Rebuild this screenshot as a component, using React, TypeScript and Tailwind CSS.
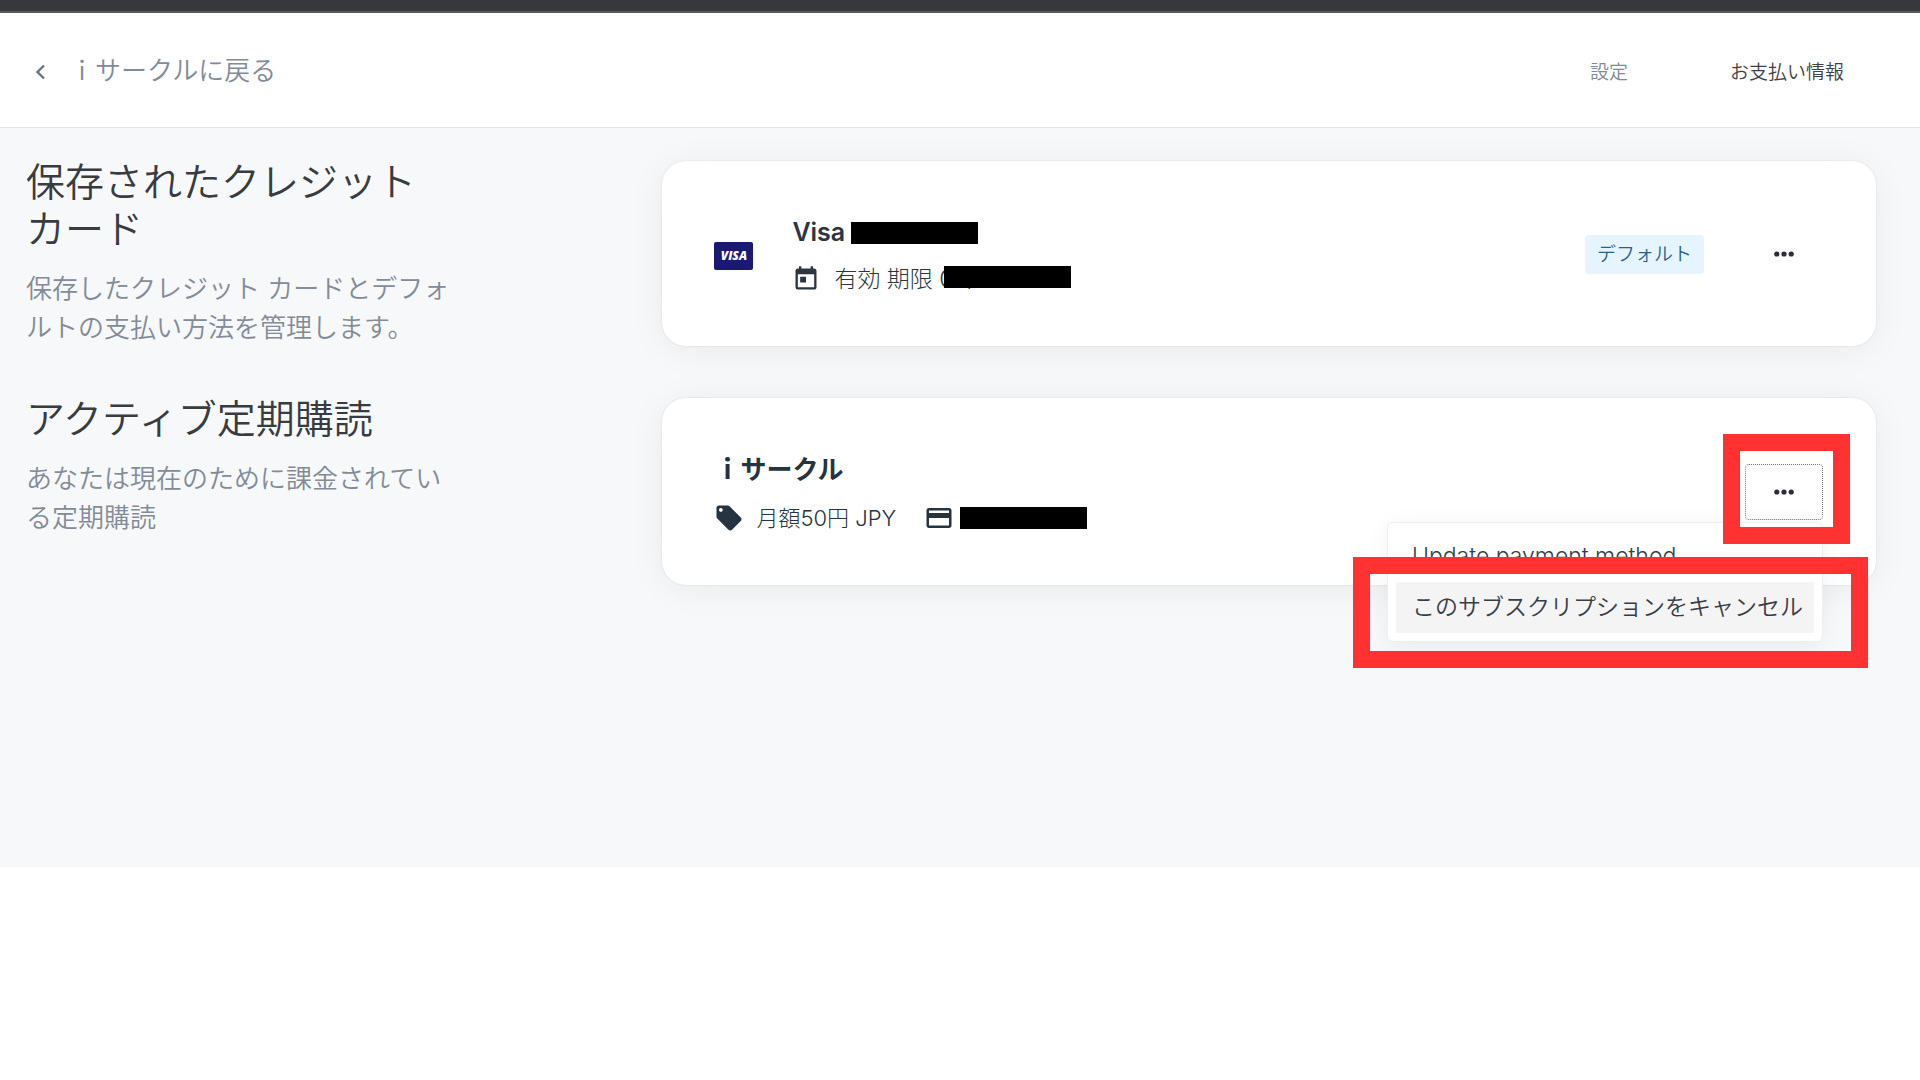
import React, { useState } from "react";
import { MdCreditCard, MdLocalOffer, MdToday } from "react-icons/md";

type SectionProps = {
  title: string;
  description: string;
  children: React.ReactNode;
};

const Section = ({ title, description, children }: SectionProps) => (
  <section className="flex items-start">
    <div className="w-[34.5%] shrink-0 pl-[26px]">
      <div className="max-w-[430px]">
        <h2 className="text-[39px] leading-[47px] text-[#383b40]">{title}</h2>
        <p className="mt-[17px] text-[26px] leading-[39px] text-[#828b97]">
          {description}
        </p>
      </div>
    </div>
    <div className="flex-1 pt-[3px] pr-11">{children}</div>
  </section>
);

const Card = ({ children }: { children: React.ReactNode }) => (
  <div className="flex items-center rounded-3xl bg-white pt-[52px] pr-[53px] pb-[47px] pl-[52px] shadow-[0_0_2px_rgba(0,0,0,0.12),0_4px_36px_rgba(0,0,0,0.06)]">
    {children}
  </div>
);

const Redacted = () => <span className="block h-[22px] w-[127px] bg-black" />;

const Dots = () => (
  <svg width="20" height="6" viewBox="0 0 20 6" fill="#2a2e34">
    <circle cx="2.8" cy="3" r="2.6" />
    <circle cx="10" cy="3" r="2.6" />
    <circle cx="17.2" cy="3" r="2.6" />
  </svg>
);

const App = () => {
  const [open, setOpen] = useState<boolean>(true);

  return (
    <div className="bg-white font-['Inter','Noto_Sans_CJK_JP',sans-serif] font-[350]">
      <div className="h-[13px] border-b-2 border-[#58595d] bg-[#37383d]" />

      {/* Header */}
      <header className="flex h-[115px] items-center justify-between border-b border-[#e2e4e6] pr-[76px] pl-[34px]">
        <a href="#" className="flex items-center gap-[23px] text-[26px] text-[#828b97]">
          <svg
            width="12"
            height="16"
            viewBox="0 0 12 16"
            fill="none"
            stroke="#6b747e"
            strokeWidth="2.4"
            className="mt-1"
          >
            <path d="M10 1.5L3.5 8l6.5 6.5" />
          </svg>
          ｉサークルに戻る
        </a>
        <nav className="flex gap-[102px] pt-1.5 text-[19px]">
          <a href="#" className="text-[#828b97]">
            設定
          </a>
          <a href="#" className="text-[#3d4146]">
            お支払い情報
          </a>
        </nav>
      </header>

      <main className="flex flex-col gap-12 bg-[#f6f8fa] pt-[30px] pb-[282px]">
        <Section
          title="保存されたクレジット カード"
          description="保存したクレジット カードとデフォルトの支払い方法を管理します。"
        >
          <Card>
            <span className="flex h-7 w-[39px] items-center justify-center rounded-xs bg-[#1a1a72] font-['Open_Sans',sans-serif] text-[12px] font-extrabold text-white italic">
              VISA
            </span>
            <div className="ml-[39px] flex-1 text-[#2b3640]">
              <div className="flex h-10 items-center gap-1.5">
                <h3 className="text-[25px] font-semibold">Visa</h3>
                <Redacted />
              </div>
              <div className="mt-1.5 flex h-10 items-center gap-3.5">
                <MdToday size={28} />
                <span className="relative text-[23px] font-light">
                  有効 期限 00/
                  <span className="absolute top-1 left-[110px]">
                    <Redacted />
                  </span>
                </span>
              </div>
            </div>
            <div className="mb-1 flex items-center gap-[41px]">
              <span className="rounded-sm bg-[#e6f4fd] px-3 text-[19px] leading-[39px] text-[#2c5f90]">
                デフォルト
              </span>
              <button
                aria-label="カードのメニュー"
                className="flex h-14 w-[78px] items-center justify-center"
              >
                <Dots />
              </button>
            </div>
          </Card>
        </Section>

        <Section
          title="アクティブ定期購読"
          description="あなたは現在のために課金されている定期購読"
        >
          <Card>
            <div className="flex-1 text-[#263340]">
              <h3 className="text-[26px] leading-10 font-bold">ｉサークル</h3>
              <div className="mt-2 flex h-10 items-center">
                <MdLocalOffer size={30} />
                <span className="ml-3 text-[22px] font-light">月額50円 JPY</span>
                <MdCreditCard size={30} className="mr-1.5 ml-7" />
                <Redacted />
              </div>
            </div>
            <div className="relative mb-1">
              <button
                aria-label="定期購読のメニュー"
                aria-expanded={open}
                onClick={() => setOpen(!open)}
                className="flex h-14 w-[78px] items-center justify-center rounded-sm border border-dotted border-[#6f757c]"
              >
                <Dots />
              </button>
              {open && (
                <div className="absolute top-[58px] right-0 w-[436px] rounded-md border border-[#eeeff1] bg-white p-2 text-[23px] text-[#383d45] shadow-[0_4px_24px_rgba(0,0,0,0.06)]">
                  <button className="block h-[51px] w-full px-4 text-left whitespace-nowrap">
                    Update payment method
                  </button>
                  <button className="block h-[51px] w-full bg-[#f4f4f5] px-4 text-left whitespace-nowrap">
                    このサブスクリプションをキャンセル
                  </button>
                </div>
              )}
              {/* Highlight frames */}
              <div className="pointer-events-none absolute -top-[30px] -left-[22px] h-[110px] w-[127px] border-[17px] border-[#ff3131]" />
              <div className="pointer-events-none absolute top-[93px] -right-[45px] h-[111px] w-[515px] border-[17px] border-[#ff3131]" />
            </div>
          </Card>
        </Section>
      </main>
    </div>
  );
};

export default App;
